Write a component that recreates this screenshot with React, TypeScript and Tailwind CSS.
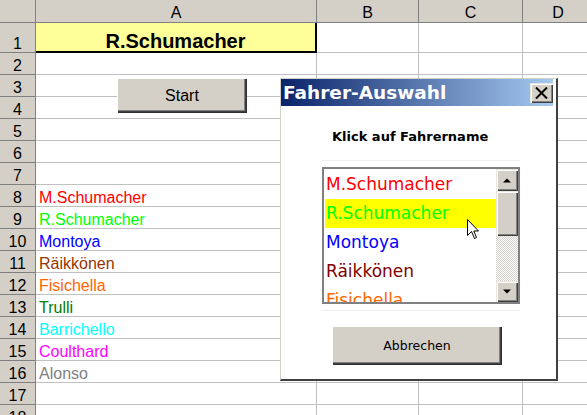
import React from "react";

type Entry = { t: string; c: string };

const colA: Record<number, Entry> = {
  8: { t: "M.Schumacher", c: "text-[#ff0000]" },
  9: { t: "R.Schumacher", c: "text-[#00ff00]" },
  10: { t: "Montoya", c: "text-[#0000ff]" },
  11: { t: "Räikkönen", c: "text-[#993300]" },
  12: { t: "Fisichella", c: "text-[#ff6600]" },
  13: { t: "Trulli", c: "text-[#008000]" },
  14: { t: "Barrichello", c: "text-[#00ffff]" },
  15: { t: "Coulthard", c: "text-[#ff00ff]" },
  16: { t: "Alonso", c: "text-[#808080]" },
};

const listItems: Entry[] = [
  { t: "M.Schumacher", c: "text-[#ff0000]" },
  { t: "R.Schumacher", c: "text-[#00ff00] bg-[#ffff00]" },
  { t: "Montoya", c: "text-[#0000ff]" },
  { t: "Räikkönen", c: "text-[#800000]" },
  { t: "Fisichella", c: "text-[#ff6600]" },
];

const rows = Array.from({ length: 17 }, (_, i) => i + 2);

const btn3d =
  "bg-[#d4d0c8] shadow-[inset_1px_1px_0_#ffffff,inset_-1px_-1px_0_#303030,inset_-2px_-2px_0_#404040,inset_-3px_-3px_0_#808080]";
const smallBtn =
  "bg-[#d4d0c8] shadow-[inset_1px_1px_0_#e8e6e0,inset_2px_2px_0_#ffffff,inset_-1px_-1px_0_#404040,inset_-2px_-2px_0_#808080]";

export default function App() {
  return (
    <div className="relative w-[587px] h-[415px] overflow-hidden bg-white font-['Liberation_Sans',Arial,sans-serif] text-[16px] leading-[16px] text-black">
      {/* column header */}
      <div className="flex h-[23px] bg-[#d4d0c8]">
        <div className="w-[36px] shrink-0 border-r border-b border-[#808080]" />
        <div className="w-[281px] shrink-0 border-r border-b border-[#808080] flex items-end justify-center pb-[1px]">A</div>
        <div className="w-[102px] shrink-0 border-r border-b border-[#808080] flex items-end justify-center pb-[1px]">B</div>
        <div className="w-[104px] shrink-0 border-r border-b border-[#808080] flex items-end justify-center pb-[1px]">C</div>
        <div className="flex-1 border-b border-[#808080] flex items-end justify-center pb-[1px] pl-[6px]">D</div>
      </div>

      {/* row 1 */}
      <div className="flex h-[30px]">
        <div className="w-[36px] shrink-0 bg-[#d4d0c8] border-r border-b border-[#808080] flex items-end justify-center">1</div>
        <div className="w-[281px] shrink-0 bg-[#ffff99] border-r-2 border-b-2 border-black flex items-end justify-center text-[20px] leading-[20px] font-bold">
          R.Schumacher
        </div>
        <div className="w-[102px] shrink-0 border-r border-b border-[#c0c0c0]" />
        <div className="w-[104px] shrink-0 border-r border-b border-[#c0c0c0]" />
        <div className="flex-1 border-b border-[#c0c0c0]" />
      </div>

      {rows.map((r) => {
        const e = colA[r];
        return (
          <div key={r} className="flex h-[22px]">
            <div className="w-[36px] shrink-0 bg-[#d4d0c8] border-r border-b border-[#808080] flex items-end justify-center">
              {r}
            </div>
            <div className={`w-[281px] shrink-0 border-r border-b border-[#c0c0c0] flex items-end pl-[3px] ${e ? e.c : ""}`}>
              {e ? e.t : ""}
            </div>
            <div className="w-[102px] shrink-0 border-r border-b border-[#c0c0c0]" />
            <div className="w-[104px] shrink-0 border-r border-b border-[#c0c0c0]" />
            <div className="flex-1 border-b border-[#c0c0c0]" />
          </div>
        );
      })}

      {/* Start button */}
      <div className={`absolute left-[117px] top-[78px] w-[130px] h-[35px] flex items-center justify-center text-[16px] ${btn3d}`}>
        Start
      </div>

      {/* Dialog */}
      <div className="absolute left-[280px] top-[78px] w-[278px] h-[303px] bg-white border-l border-t border-[#d4d0c8] border-r-2 border-b-2 border-r-[#404040] border-b-[#404040] flex flex-col font-['DejaVu_Sans',Tahoma,sans-serif]">
        <div className="h-[27px] mr-[3px] shrink-0 bg-[linear-gradient(to_right,#0a246a,#a6caf0)] flex items-center justify-between pl-[2px]">
          <span className="text-white font-bold text-[18.5px] leading-[20px]">Fahrer-Auswahl</span>
          <div className={`w-[23px] h-[20px] flex items-center justify-center ${smallBtn}`}>
            <svg width="13" height="12" viewBox="0 0 13 12">
              <path d="M1 0.5 L12 11.5 M12 0.5 L1 11.5" stroke="#000" strokeWidth="2" />
            </svg>
          </div>
        </div>

        <div className="mt-[23px] ml-[51px] h-[16px] text-[13px] leading-[16px] font-bold text-black">
          Klick auf Fahrername
        </div>

        <div className="mt-[15px] ml-[41px] w-[198px] border-t border-b border-[#efefef] py-[6px]">
          <div className="w-[198px] h-[137px] border-2 border-[#808080] flex bg-white">
            <div className="flex-1 overflow-hidden pt-[1px] pl-[1px] text-[17px] leading-[29px]">
              {listItems.map((it) => (
                <div key={it.t} className={`h-[29px] pl-[1px] whitespace-nowrap ${it.c}`}>
                  {it.t}
                </div>
              ))}
            </div>
            <div className="w-[22px] flex flex-col">
              <div className={`h-[22px] flex items-center justify-center ${smallBtn}`}>
                <svg width="8" height="5" viewBox="0 0 8 5">
                  <path d="M0 4.5 L4 0.5 L8 4.5 Z" fill="#000" />
                </svg>
              </div>
              <div className={`h-[45px] ${smallBtn}`} />
              <div className="flex-1 [background-image:repeating-conic-gradient(#ffffff_0%_25%,#d4d0c8_0%_50%)] [background-size:2px_2px]" />
              <div className={`h-[21px] flex items-center justify-center ${smallBtn}`}>
                <svg width="8" height="5" viewBox="0 0 8 5">
                  <path d="M0 0.5 L4 4.5 L8 0.5 Z" fill="#000" />
                </svg>
              </div>
            </div>
          </div>
        </div>

        <div className={`mt-[15px] ml-[51px] w-[170px] h-[39px] flex items-center justify-center text-[12.5px] text-black ${btn3d}`}>
          Abbrechen
        </div>
      </div>

      {/* mouse cursor */}
      <svg className="absolute left-[467px] top-[219px]" width="13" height="21" viewBox="0 0 13 21">
        <path d="M0.5 0.5 V16.5 L4.5 12.5 L7.5 19.5 L9.5 18.5 L6.8 12 H11.5 Z" fill="#ffffff" stroke="#000000" strokeWidth="1" />
      </svg>
    </div>
  );
}
